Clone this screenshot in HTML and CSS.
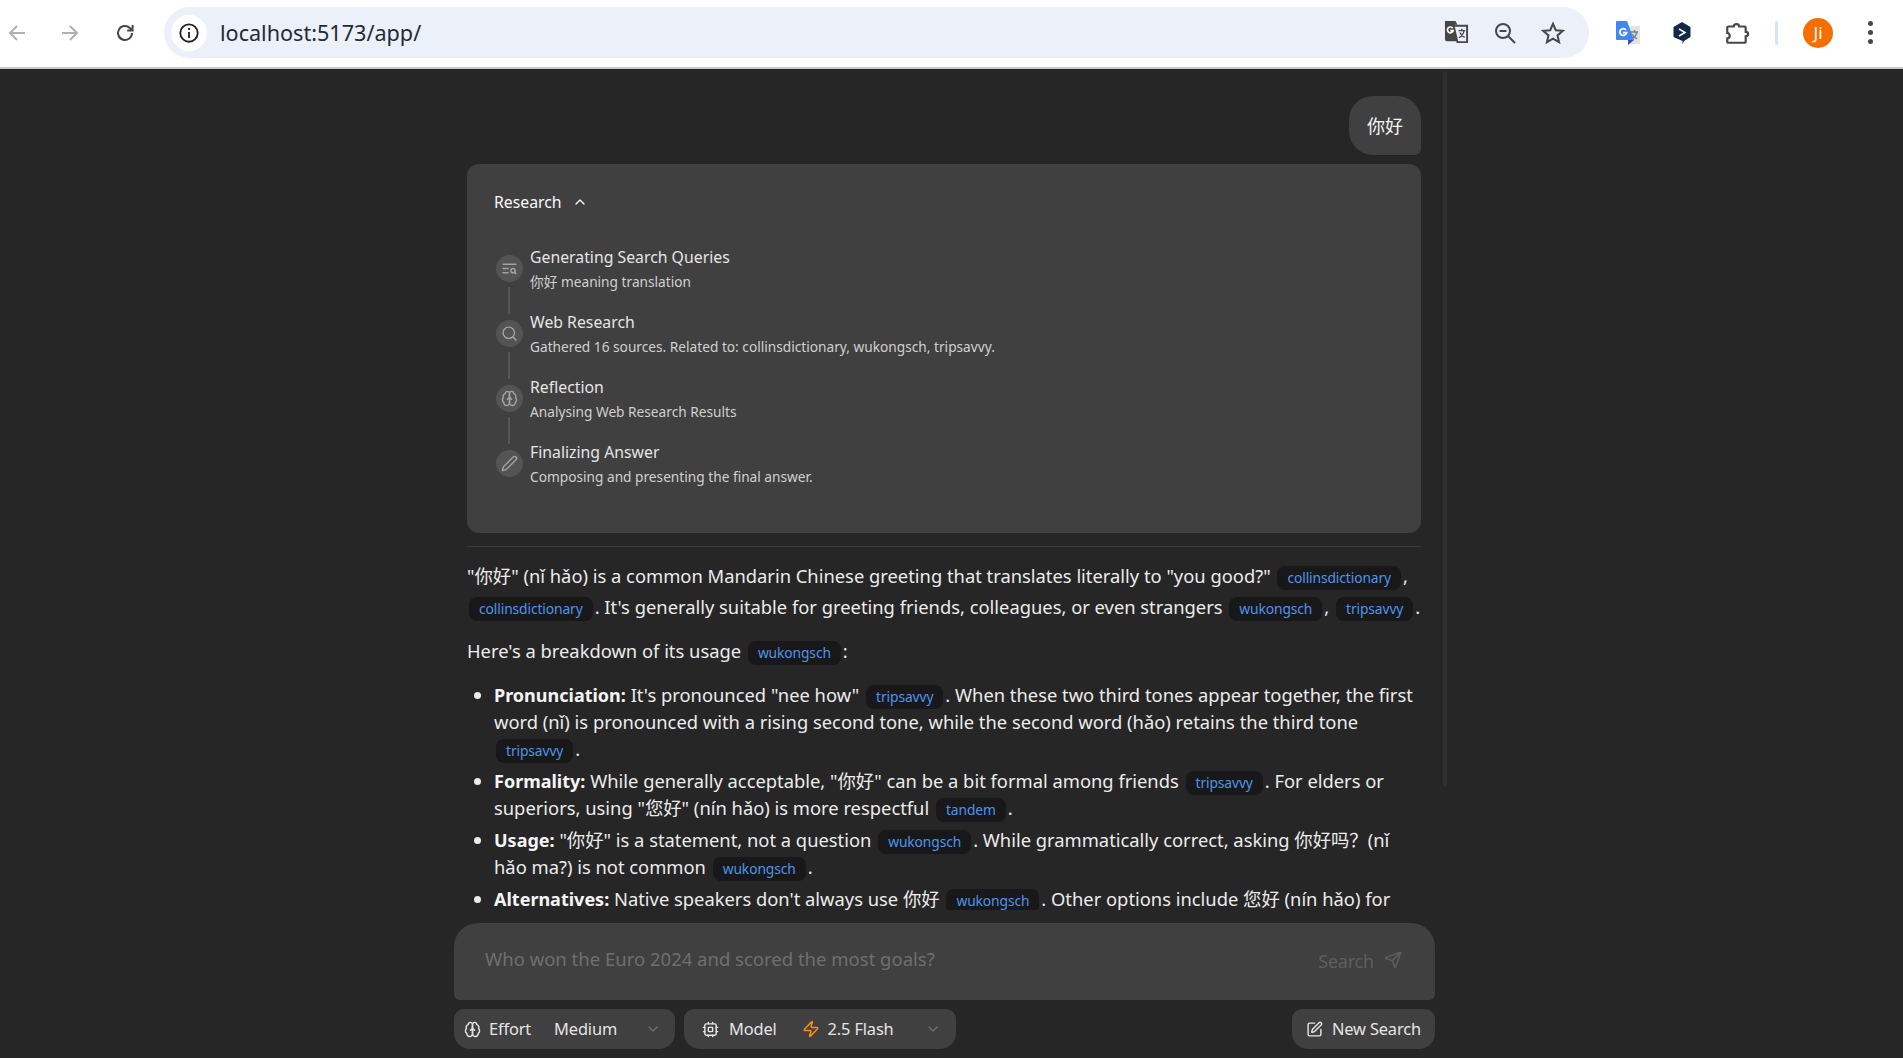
FILE: index.html
```html
<!DOCTYPE html>
<html lang="en">
<head>
<meta charset="utf-8">
<title>localhost:5173/app/</title>
<link rel="stylesheet" href="styles.css">
</head>
<body>
<header class="toolbar">
  <svg class="tb-icon back" viewBox="0 0 24 24"><path d="M20 12H5M12 5l-7 7 7 7"/></svg>
  <svg class="tb-icon forward" viewBox="0 0 24 24"><path d="M4 12h15M12 5l7 7-7 7"/></svg>
  <svg class="tb-icon reload" viewBox="0 0 24 24"><path d="M19 12a7 7 0 1 1-2.2-5.1L19 9"/><path d="M19.6 4v5.4h-5.4" /></svg>
  <div class="omnibox">
    <span class="site-chip"><svg class="info" viewBox="0 0 24 24"><circle cx="12" cy="12" r="9.5"/><path d="M12 11v6.5"/><path d="M12 6.6v2"/></svg></span>
    <span class="url">localhost:5173/app/</span>
    <svg class="omni-icon translate" viewBox="0 0 26 26"><path class="solid" d="M1 1h11l2 4h-3l4 17H3a2 2 0 0 1-2-2z"/><path class="outline" d="M10 6h14v17H14z"/><path class="outline thin" d="M15 11h7M18.500 9v2M21 11c-1 4-3 6-5.500 7.500M16.500 13c1 2.500 3 4 5 5"/><path class="glyph" d="M9 8.500a3 3 0 1 0 .5 2.500H6.500"/></svg>
    <svg class="omni-icon zoom-out" viewBox="0 0 24 24"><circle cx="10" cy="10" r="7"/><path d="M6.500 10h7M15 15l7 7"/></svg>
    <svg class="omni-icon star" viewBox="0 0 24 24"><path d="M12 2.800l2.800 6.400 7 .6-5.300 4.600 1.600 6.800-6.100-3.600-6.100 3.600 1.600-6.800-5.300-4.600 7-.6z"/></svg>
  </div>
  <svg class="ext gt" viewBox="0 0 26 26"><path fill="#e3e3e3" d="M12 6h13v18H15z"/><path fill="#4285f4" d="M1 2a1 1 0 0 1 1-1h10l7 19H2a1 1 0 0 1-1-1z"/><path fill="#3c4ec4" d="M13 20h6l-6 5z"/><path fill="none" stroke="#78828c" stroke-width="1.400" d="M16 12h7M19.500 10v2M22 12c-1 3.500-2.500 5.500-5 7M17 14c1 2 3 3.500 5 5"/><path fill="none" stroke="#fff" stroke-width="1.800" d="M11 10a3.400 3.400 0 1 0 .600 2.600H8"/></svg>
  <svg class="ext deepl" viewBox="0 0 20 24"><path fill="#0f2b46" d="M10 1l8.500 5v10L12 20l-1.500 3v-3L1.500 16V6z"/><path fill="none" stroke="#fff" stroke-width="1.500" d="M7 8l6 3.500L7 15"/></svg>
  <svg class="ext puzzle" viewBox="0 0 24 24"><path d="M4 6h5c0-3 5-3 5 0h5a1 1 0 0 1 1 1v4c3 0 3 4 0 4v5a1 1 0 0 1-1 1H4a1 1 0 0 1-1-1v-3c3 0 3-5 0-5V7a1 1 0 0 1 1-1z"/></svg>
  <span class="tb-sep"></span>
  <span class="avatar">Ji</span>
  <span class="kebab"><i></i><i></i><i></i></span>
</header>

<main class="app">
  <div class="scroll-thumb"></div>
  <section class="messages">
    <div class="bubble-row"><div class="bubble">你好</div></div>
    <section class="research">
      <h2 class="research-title">Research
        <svg class="lucide chev-up" viewBox="0 0 24 24"><path d="m18 15-6-6-6 6"/></svg>
      </h2>
      <ol class="steps">
        <li class="step">
          <span class="step-mark"><svg class="lucide" viewBox="0 0 24 24"><path d="M21 6H3"/><path d="M10 12H3"/><path d="M10 18H3"/><circle cx="17" cy="15" r="3"/><path d="m21 19-1.900-1.900"/></svg></span>
          <div class="step-body"><h3 class="step-title">Generating Search Queries</h3><p class="step-desc">你好 meaning translation</p></div>
        </li>
        <li class="step">
          <span class="step-mark"><svg class="lucide" viewBox="0 0 24 24"><circle cx="11" cy="11" r="8"/><path d="m21 21-4.300-4.300"/></svg></span>
          <div class="step-body"><h3 class="step-title">Web Research</h3><p class="step-desc">Gathered 16 sources. Related to: collinsdictionary, wukongsch, tripsavvy.</p></div>
        </li>
        <li class="step">
          <span class="step-mark"><svg class="lucide" viewBox="0 0 24 24"><path d="M12 5a3 3 0 1 0-5.997.125 4 4 0 0 0-2.526 5.770 4 4 0 0 0 .556 6.588A4 4 0 1 0 12 18Z"/><path d="M12 5a3 3 0 1 1 5.997.125 4 4 0 0 1 2.526 5.770 4 4 0 0 1-.556 6.588A4 4 0 1 1 12 18Z"/><path d="M15 13a4.500 4.500 0 0 1-3-4 4.500 4.500 0 0 1-3 4"/></svg></span>
          <div class="step-body"><h3 class="step-title">Reflection</h3><p class="step-desc">Analysing Web Research Results</p></div>
        </li>
        <li class="step">
          <span class="step-mark"><svg class="lucide" viewBox="0 0 24 24"><path d="M21.174 6.812a1 1 0 0 0-3.986-3.987L3.842 16.174a2 2 0 0 0-.5.830l-1.321 4.352a.5.5 0 0 0 .623.622l4.353-1.320a2 2 0 0 0 .830-.497z"/></svg></span>
          <div class="step-body"><h3 class="step-title">Finalizing Answer</h3><p class="step-desc">Composing and presenting the final answer.</p></div>
        </li>
      </ol>
    </section>
    <hr class="divider">
    <article class="answer">
      <p class="para first">"你好" (nǐ hǎo) is a common Mandarin Chinese greeting that translates literally to "you good?" <a class="chip">collinsdictionary</a>, <a class="chip">collinsdictionary</a>. It's generally suitable for greeting friends, colleagues, or even strangers <a class="chip">wukongsch</a>, <a class="chip">tripsavvy</a>.</p>
      <p class="para">Here's a breakdown of its usage <a class="chip">wukongsch</a>:</p>
      <ul class="list">
        <li><strong>Pronunciation:</strong> It's pronounced "nee how" <a class="chip">tripsavvy</a>. When these two third tones appear together, the first word (nǐ) is pronounced with a rising second tone, while the second word (hǎo) retains the third tone <a class="chip">tripsavvy</a>.</li>
        <li><strong>Formality:</strong> While generally acceptable, "你好" can be a bit formal among friends <a class="chip">tripsavvy</a>. For elders or superiors, using "您好" (nín hǎo) is more respectful <a class="chip">tandem</a>.</li>
        <li><strong>Usage:</strong> "你好" is a statement, not a question <a class="chip">wukongsch</a>. While grammatically correct, asking 你好吗？(nǐ hǎo ma?) is not common <a class="chip">wukongsch</a>.</li>
        <li><strong>Alternatives:</strong> Native speakers don't always use 你好 <a class="chip">wukongsch</a>. Other options include 您好 (nín hǎo) for</li>
      </ul>
    </article>
  </section>

  <footer class="composer">
    <div class="input-box">
      <span class="placeholder">Who won the Euro 2024 and scored the most goals?</span>
      <span class="search-btn">Search
        <svg class="lucide send" viewBox="0 0 24 24"><path d="M14.536 21.686a.5.5 0 0 0 .937-.024l6.500-19a.496.496 0 0 0-.635-.635l-19 6.500a.5.5 0 0 0-.024.937l7.930 3.180a2 2 0 0 1 1.112 1.110z"/><path d="m21.854 2.147-10.940 10.939"/></svg>
      </span>
    </div>
    <div class="controls">
      <div class="pill effort">
        <svg class="lucide pill-icon" viewBox="0 0 24 24"><path d="M12 5a3 3 0 1 0-5.997.125 4 4 0 0 0-2.526 5.770 4 4 0 0 0 .556 6.588A4 4 0 1 0 12 18Z"/><path d="M12 5a3 3 0 1 1 5.997.125 4 4 0 0 1 2.526 5.770 4 4 0 0 1-.556 6.588A4 4 0 1 1 12 18Z"/><path d="M15 13a4.500 4.500 0 0 1-3-4 4.500 4.500 0 0 1-3 4"/></svg>
        <span class="pill-label">Effort</span>
        <span class="pill-value">Medium</span>
        <svg class="lucide pill-chev" viewBox="0 0 24 24"><path d="m6 9 6 6 6-6"/></svg>
      </div>
      <div class="pill model">
        <svg class="lucide pill-icon" viewBox="0 0 24 24"><rect x="4" y="4" width="16" height="16" rx="2"/><rect x="9" y="9" width="6" height="6" rx="1"/><path d="M15 2v2M15 20v2M2 15h2M2 9h2M20 15h2M20 9h2M9 2v2M9 20v2"/></svg>
        <span class="pill-label">Model</span>
        <svg class="lucide zap" viewBox="0 0 24 24"><path d="M4 14a1 1 0 0 1-.78-1.630l9.900-10.200a.5.5 0 0 1 .860.460l-1.920 6.020A1 1 0 0 0 13 10h7a1 1 0 0 1 .780 1.630l-9.900 10.200a.5.5 0 0 1-.860-.460l1.920-6.020A1 1 0 0 0 11 14z"/></svg>
        <span class="pill-value">2.5 Flash</span>
        <svg class="lucide pill-chev" viewBox="0 0 24 24"><path d="m6 9 6 6 6-6"/></svg>
      </div>
      <div class="pill new-search">
        <svg class="lucide pill-icon" viewBox="0 0 24 24"><path d="M12 3H5a2 2 0 0 0-2 2v14a2 2 0 0 0 2 2h14a2 2 0 0 0 2-2v-7"/><path d="M18.375 2.625a1 1 0 0 1 3 3l-9.013 9.014a2 2 0 0 1-.853.505l-2.873.840a.5.5 0 0 1-.620-.620l.840-2.873a2 2 0 0 1 .506-.852z"/></svg>
        <span class="pill-label">New Search</span>
      </div>
    </div>
  </footer>
</main>
</body>
</html>
```
FILE: styles.css
```css
* { box-sizing: border-box; }
html, body { margin: 0; height: 100%; }
body {
  height: 1058px;
  overflow: hidden;
  background: #262626;
  color: #f5f5f5;
  font-family: "Noto Sans", "Noto Sans CJK SC", sans-serif;
  display: flex;
  flex-direction: column;
}
svg { display: block; flex: none; }

/* browser chrome */
.toolbar {
  height: 69px;
  flex: none;
  background: #fff;
  border-bottom: 2px solid #c9c9c9;
  display: flex;
  align-items: center;
  padding-left: 5px;
  padding-bottom: 2px;
}
.tb-icon { width: 24px; height: 24px; fill: none; stroke-width: 2; }
.back, .forward { stroke: #b0b0b0; }
.forward { margin-left: 29px; }
.reload { stroke: #474747; margin-left: 31px; }
.omnibox {
  width: 1425px;
  height: 51px;
  margin-left: 27px;
  background: #ebf0f9;
  border-radius: 26px;
  display: flex;
  align-items: center;
  padding-left: 7px;
}
.site-chip {
  width: 36px; height: 36px;
  background: #fff;
  border-radius: 50%;
  display: flex; align-items: center; justify-content: center;
}
.info { width: 22px; height: 22px; fill: none; stroke: #1f1f1f; stroke-width: 2; }
.url {
  margin-left: 13px;
  flex: 1;
  font-size: 21.600px;
  color: #1f2a37;
}
.omni-icon { fill: none; stroke: #474747; stroke-width: 2; width: 24px; height: 24px; }
.translate { width: 25px; height: 25px; margin-right: 24px; }
.translate .solid { fill: #474747; stroke: none; }
.translate .outline { stroke-width: 2; fill: #ebf0f9; }
.translate .thin { stroke-width: 1.400; fill: none; }
.translate .glyph { stroke: #fff; stroke-width: 1.800; fill: none; }
.zoom-out { margin-right: 24px; }
.star { margin-right: 24px; }
.gt { width: 26px; height: 26px; margin-left: 26px; }
.deepl { width: 20px; height: 24px; margin-left: 31px; }
.puzzle { width: 26px; height: 26px; margin-left: 32px; fill: none; stroke: #474747; stroke-width: 2; }
.tb-sep { width: 3px; height: 24px; background: #d3e3fd; border-radius: 2px; margin-left: 25px; }
.avatar {
  width: 30px; height: 30px;
  margin-left: 25px;
  border-radius: 50%;
  background: #f36f00;
  color: #fff;
  font-size: 17px;
  display: flex; align-items: center; justify-content: center;
}
.kebab { display: flex; flex-direction: column; gap: 4px; margin-left: 35px; }
.kebab i { display: block; width: 5px; height: 5px; border-radius: 50%; background: #474747; }

/* app */
.app {
  position: relative;
  flex: 1;
  min-height: 0;
  display: flex;
  flex-direction: column;
}
.scroll-thumb {
  position: absolute;
  left: 1443px;
  top: 2px;
  width: 4px;
  height: 716px;
  background: #2f2f2f;
  border-radius: 2px;
}
.messages {
  flex: 1;
  min-height: 0;
  overflow: hidden;
  margin-left: 467px;
  width: 954px;
  padding-top: 27px;
}
.bubble-row { display: flex; justify-content: flex-end; }
.bubble {
  height: 59px;
  padding: 0 18px 2px;
  display: flex; align-items: center;
  background: #404040;
  font-size: 18px;
  border-radius: 24px 24px 6px 24px;
}
.research {
  margin-top: 9px;
  height: 369px;
  background: #404040;
  border-radius: 12px;
  padding: 24px 27px 0;
}
.research-title {
  margin: 0;
  font-size: 15.800px;
  font-weight: 400;
  line-height: 28px;
  display: flex; align-items: center; gap: 10px;
  color: #fafafa;
}
.lucide { fill: none; stroke: currentColor; stroke-width: 2; stroke-linecap: round; stroke-linejoin: round; }
.chev-up { width: 16px; height: 16px; }
.steps { list-style: none; margin: 26px 0 0; padding: 0 0 0 2px; }
.step { position: relative; display: flex; gap: 7px; height: 65px; align-items: flex-start; }
.step:not(:last-child)::after {
  content: "";
  position: absolute;
  left: 12px;
  top: 45px;
  width: 2px;
  height: 27px;
  background: #565656;
}
.step-mark {
  width: 27px; height: 27px;
  margin-top: 13px;
  border-radius: 50%;
  background: #545454;
  color: #a3a3a3;
  display: flex; align-items: center; justify-content: center;
  flex: none;
}
.step-mark .lucide { width: 17px; height: 17px; }
.step-body { padding-top: 3px; }
.step-title { margin: 0; font-size: 15.800px; font-weight: 400; line-height: 24px; color: #e5e5e5; }
.step-desc { margin: 3px 0 0; font-size: 13.700px; line-height: 20px; color: #d0d0d0; }
.divider { border: 0; height: 1px; background: #3a3a3a; margin: 13px 0 0; }

/* answer */
.answer { font-size: 18.350px; line-height: 26.800px; color: #ececec; }
.para { margin: 0 0 13px; line-height: 31px; }
.para.first { margin-top: 13px; }
.chip {
  display: inline-block;
  height: 24px;
  line-height: 24px;
  vertical-align: 0;
  padding: 0 10px;
  margin: -2px 2px;
  font-size: 13.800px;
  letter-spacing: -0.1px;
  color: #4f94ea;
  background: #18181a;
  border-radius: 8px;
}
.list { margin: 16px 0 0; padding: 0 0 0 27px; }
.list li { margin-bottom: 5.500px; }
strong { font-weight: 700; font-size: 18px; color: #f5f5f5; }

/* composer */
.composer {
  flex: none;
  margin-left: 454px;
  width: 981px;
  padding: 13px 0 9px;
}
.input-box {
  height: 77px;
  background: #404040;
  border-radius: 24px 24px 6px 6px;
  display: flex;
  align-items: flex-start;
  justify-content: space-between;
  padding: 22px 33px 0 31px;
}
.placeholder { font-size: 18.500px; line-height: 28px; color: #6f6f6f; }
.search-btn { display: flex; align-items: center; gap: 10px; font-size: 18px; line-height: 32px; color: #5e5e5e; letter-spacing: -0.2px; }
.send { width: 18px; height: 18px; margin-top: -3px; }
.controls { margin-top: 9px; display: flex; gap: 9px; }
.pill {
  height: 40px;
  background: #404040;
  border-radius: 10px 10px 16px 16px;
  display: flex; align-items: center;
  font-size: 16.400px;
  color: #e5e5e5;
  letter-spacing: -0.15px;
}
.pill-icon { width: 17px; height: 17px; margin-left: 10px; }
.pill-label { margin-left: 8px; margin-top: -2px; }
.pill-value { margin-top: -2px; }
.pill-chev { width: 16px; height: 16px; color: #6f6f6f; margin-left: auto; }
.effort { width: 221px; padding-right: 14px; }
.effort .pill-value { margin-left: 23px; }
.model { width: 272px; padding-right: 15px; }
.model .pill-icon { margin-left: 18px; }
.model .pill-label { margin-left: 10px; }
.zap { width: 18px; height: 18px; color: #f98b1d; margin-left: 25px; }
.model .pill-value { margin-left: 8px; }
.new-search { margin-left: auto; width: 143px; }
.new-search .pill-icon { margin-left: 14px; }
.new-search .pill-label { margin-left: 9px; }
```
